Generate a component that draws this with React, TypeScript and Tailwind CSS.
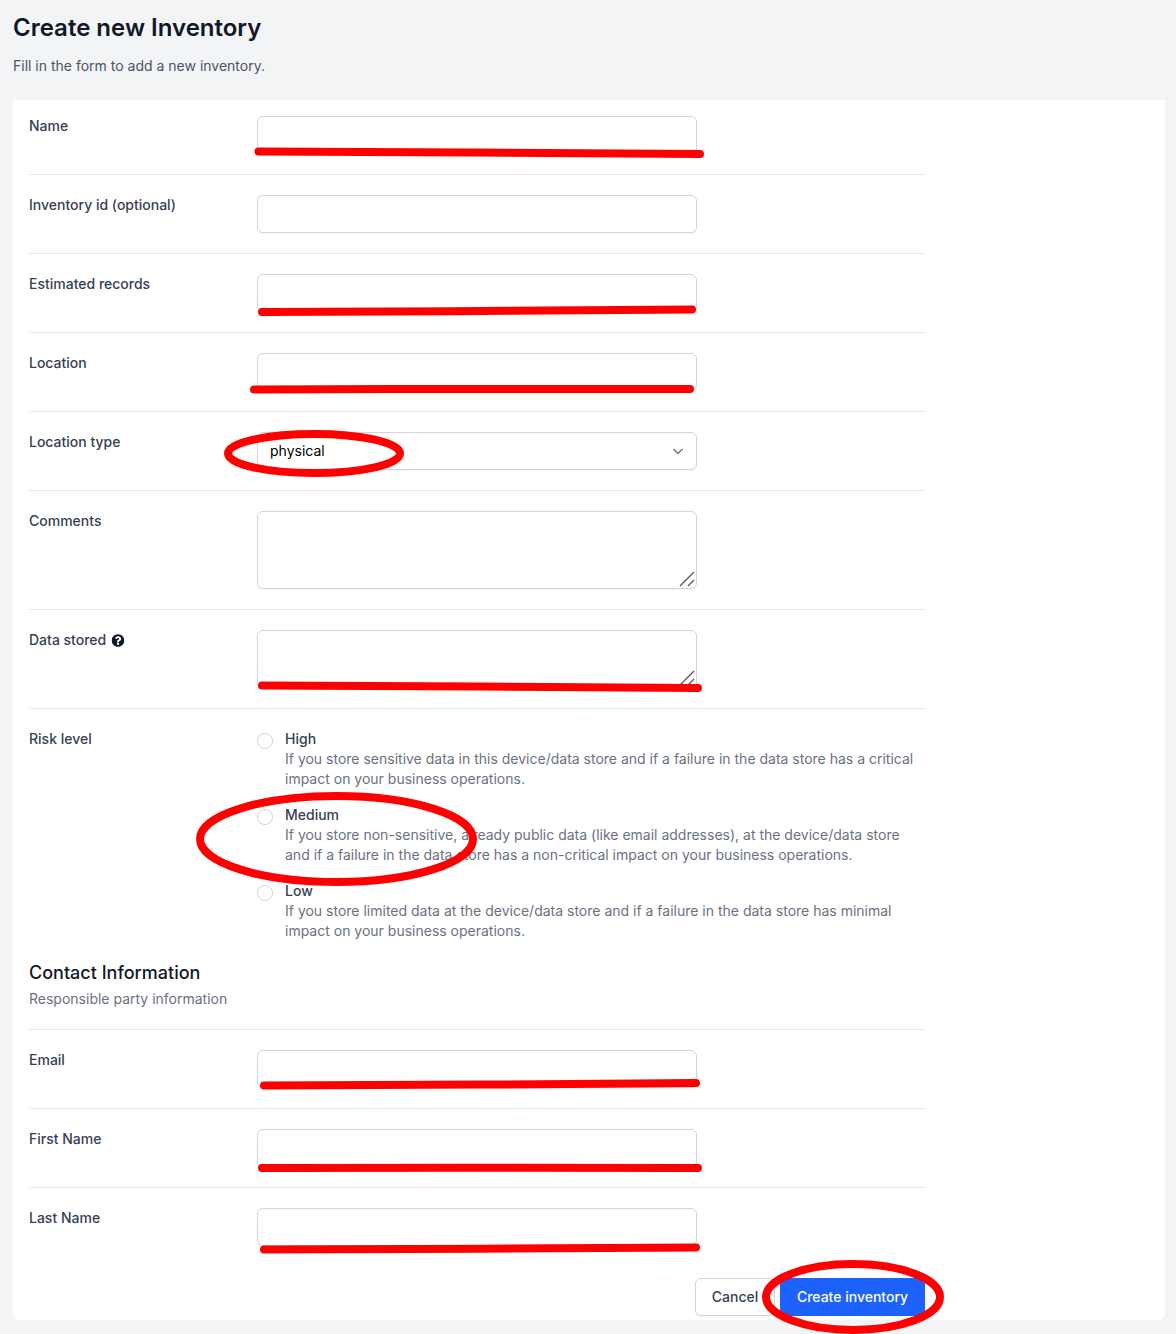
import { FaQuestionCircle } from "react-icons/fa"

const inputClass =
  "block w-[440px] h-[38px] rounded-md border border-gray-300 bg-white px-3 text-sm shadow-xs"

const Row = ({ label, first, children }: { label: React.ReactNode; first?: boolean; children: React.ReactNode }) => (
  <div className={first ? "grid grid-cols-[228px_668px] pt-4 pb-5" : "grid grid-cols-[228px_668px] border-t border-gray-200 py-5"}>
    <div className="flex items-center gap-[6px] self-start text-sm font-medium text-gray-700">{label}</div>
    <div>{children}</div>
  </div>
)

const TextArea = ({ rows }: { rows: number }) => (
  <div className="relative w-[440px]">
    <textarea rows={rows} className="block w-full resize-none rounded-md border border-gray-300 px-3 py-2 text-sm leading-5 shadow-xs" />
    {/* resize handle */}
    <svg className="pointer-events-none absolute bottom-[2px] right-[2px]" width="16" height="16" fill="none" stroke="#555555" strokeWidth="1.2">
      <path d="M1 15 L15 1" />
      <path d="M9 15 L15 9" />
    </svg>
  </div>
)

const risks = [
  {
    title: "High",
    text: "If you store sensitive data in this device/data store and if a failure in the data store has a critical impact on your business operations.",
  },
  {
    title: "Medium",
    text: "If you store non-sensitive, already public data (like email addresses), at the device/data store and if a failure in the data store has a non-critical impact on your business operations.",
  },
  {
    title: "Low",
    text: "If you store limited data at the device/data store and if a failure in the data store has minimal impact on your business operations.",
  },
]

const App = () => {
  return (
    <div className="relative h-[1334px] overflow-hidden bg-[#f3f4f6] px-[13px] pt-[12px] font-['Inter',sans-serif]">

      {/* Header */}
      <h1 className="text-2xl font-semibold text-gray-900">Create new Inventory</h1>
      <p className="mt-[12px] text-sm text-gray-600">Fill in the form to add a new inventory.</p>

      {/* Card */}
      <div className="mt-[24px] h-[1220px] w-[1152px] rounded-b-lg bg-white pl-4">
        <div className="w-[896px]">
          <Row label="Name" first>
            <input className={inputClass} />
          </Row>
          <Row label="Inventory id (optional)">
            <input className={inputClass} />
          </Row>
          <Row label="Estimated records">
            <input className={inputClass} />
          </Row>
          <Row label="Location">
            <input className={inputClass} />
          </Row>
          <Row label="Location type">
            <div className="relative w-[440px]">
              <select className={inputClass + " appearance-none text-black"} defaultValue="physical">
                <option value="physical">physical</option>
                <option value="virtual">virtual</option>
              </select>
              <svg viewBox="0 0 12 12" className="pointer-events-none absolute right-[13px] top-[13px] size-3 text-gray-500" fill="none" stroke="currentColor" strokeWidth="1.4">
                <path d="M1.5 4 L6 8.5 L10.5 4" />
              </svg>
            </div>
          </Row>
          <Row label="Comments">
            <TextArea rows={3} />
          </Row>
          <Row
            label={
              <>
                Data stored
                <FaQuestionCircle className="size-[13px] -translate-x-[0.5px] text-gray-900" />
              </>
            }
          >
            <TextArea rows={2} />
          </Row>

          {/* Risk level */}
          <div className="grid grid-cols-[228px_668px] border-t border-gray-200 pt-5">
            <div className="text-sm font-medium text-gray-700">Risk level</div>
            <div className="flex flex-col gap-4">
              {risks.map((risk) => (
                <label key={risk.title} className="flex gap-3">
                  <input type="radio" name="risk" className="mt-1 size-4 shrink-0 appearance-none rounded-full border border-gray-300 bg-white" />
                  <span className="text-sm">
                    <span className="block font-medium text-gray-700">{risk.title}</span>
                    <span className="block text-gray-500">{risk.text}</span>
                  </span>
                </label>
              ))}
            </div>
          </div>

          {/* Contact */}
          <div className="pt-[18px] pb-5">
            <h2 className="text-lg font-medium text-gray-900">Contact Information</h2>
            <p className="mt-[2px] text-sm text-gray-500">Responsible party information</p>
          </div>
          <Row label="Email">
            <input className={inputClass} />
          </Row>
          <Row label="First Name">
            <input className={inputClass} />
          </Row>
          <Row label="Last Name">
            <input className={inputClass} />
          </Row>

          {/* Actions */}
          <div className="mt-3 flex justify-end gap-[5px]">
            <button className="h-[38px] w-[80px] rounded-md border border-gray-300 bg-white text-sm font-medium text-gray-700 shadow-xs">
              Cancel
            </button>
            <button className="h-[38px] w-[145px] rounded-md bg-[#1d62fb] text-sm font-medium text-white">
              Create inventory
            </button>
          </div>
        </div>
      </div>

      {/* Red marker annotations */}
      <svg className="pointer-events-none absolute left-0 top-0" width="1176" height="1334" fill="none" stroke="#ff0000" strokeLinecap="round">
        <g strokeWidth="8">
          <path d="M258.5 151.5 C400 152 560 153 700 154" />
          <path d="M262 312 C400 311.5 560 311 692 309.5" />
          <path d="M254 389.5 C400 388.5 560 389 690 389" />
          <path d="M262 685.5 C400 686 560 687 698 688" />
          <path d="M264 1085.5 C400 1085 560 1084.5 696 1083" />
          <path d="M262 1168 C400 1167.5 560 1167.5 698 1168" />
          <path d="M264 1249.5 C400 1249 560 1248.5 696 1247.5" />
        </g>
        <ellipse cx="314" cy="453.5" rx="86" ry="19.5" strokeWidth="8" />
        <ellipse cx="336.5" cy="839" rx="136.5" ry="43" strokeWidth="8" />
        <ellipse cx="853" cy="1297" rx="87" ry="33" strokeWidth="8" />
      </svg>

    </div>
  )
}

export default App
